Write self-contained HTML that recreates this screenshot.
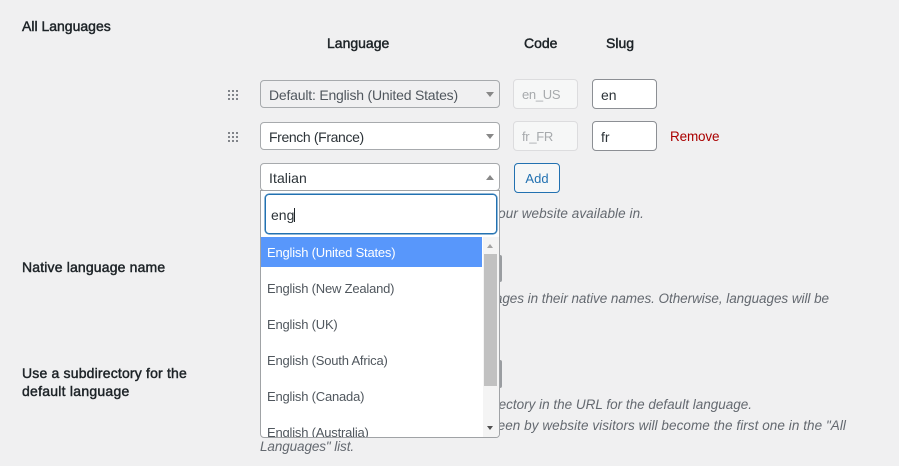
<!DOCTYPE html>
<html lang="en">
<head>
<meta charset="utf-8">
<title>All Languages</title>
<style>
html,body{margin:0;padding:0}
body{width:899px;height:466px;overflow:hidden;position:relative;background:#f0f0f1;color:#1d2327;font:14px/18px "Liberation Sans",sans-serif}
.t{position:absolute;white-space:nowrap;line-height:18px}
.b{color:#1d2327;-webkit-text-stroke:.45px #1d2327}
.i{font-style:italic;color:#646970;font-size:13.5px}
.box{position:absolute;box-sizing:border-box;border:1px solid #8c8f94;border-radius:4px;background:#fff;color:#2c3338;padding-left:8px}
.sel{left:260px;width:240px;height:28px;line-height:28px;border-color:#a7aaad}
.code{left:513px;width:65px;height:30px;line-height:30px;background:#f6f7f7;border-color:#dcdcde;color:#a7aaad;padding-left:8px;font-size:13px;letter-spacing:-.3px}
.slug{left:592px;width:65px;height:30px;line-height:30px;padding-left:8px}
.arr{position:absolute;width:0;height:0;border-left:4px solid transparent;border-right:4px solid transparent}
.dn{border-top:5px solid #888}
.up{border-bottom:5px solid #888}
.grip{position:absolute;left:228px;width:10px;height:10px;background-image:radial-gradient(circle at 1px 1px,#787c82 1px,transparent 1.2px);background-size:4px 4px}
.tog{position:absolute;left:500px;width:2px;background:#9a9da1;border-radius:0 2px 2px 0}
#dd{position:absolute;left:260px;top:190px;width:240px;height:248px;box-sizing:border-box;background:#fff;border:1px solid #a0a3a6;border-radius:0 0 4px 4px;overflow:hidden;z-index:2}
#search{position:absolute;left:4px;top:3px;width:232px;height:40px;box-sizing:border-box;border:1px solid #2271b1;border-radius:4px;box-shadow:0 0 0 .5px #2271b1;line-height:40px;padding-left:5px;color:#2c3338}
#caret{position:absolute;left:28px;top:13px;width:1px;height:14px;background:#1d2327}
.o{position:absolute;left:0;width:221px;height:30px;line-height:32px;padding-left:6px;box-sizing:border-box;color:#50575e;white-space:nowrap;font-size:13px;letter-spacing:-.2px}
.hl{background:#5897fb;color:#fff}
#track{position:absolute;left:222px;top:46px;width:16px;height:200px;background:#f4f4f4}
#thumb{position:absolute;left:1px;top:17px;width:13px;height:132px;background:#c1c1c1}
</style>
</head>
<body>

<div class="t b" style="left:22px;top:17px">All Languages</div>
<div class="t b" style="left:327px;top:34px">Language</div>
<div class="t b" style="left:524px;top:34px">Code</div>
<div class="t b" style="left:606px;top:34px">Slug</div>

<div class="grip" style="top:90px"></div>
<div class="box sel" style="top:80px;background:#f0f0f1;color:#50575e;letter-spacing:-.2px">Default: English (United States)</div>
<div class="arr dn" style="left:486px;top:92px"></div>
<div class="box code" style="top:79px">en_US</div>
<div class="box slug" style="top:79px">en</div>

<div class="grip" style="top:132px"></div>
<div class="box sel" style="top:122px;letter-spacing:-.37px">French (France)</div>
<div class="arr dn" style="left:486px;top:134px"></div>
<div class="box code" style="top:121px">fr_FR</div>
<div class="box slug" style="top:121px">fr</div>
<div class="t" style="left:670px;top:128px;color:#a00;font-size:13.5px;letter-spacing:-.15px">Remove</div>

<div class="box sel" style="top:163px;letter-spacing:.08px">Italian</div>
<div class="arr up" style="left:486px;top:175px"></div>
<div class="box" style="left:514px;top:163px;width:46px;height:30px;line-height:30px;padding:0;text-align:center;background:#f6f7f7;border-color:#2271b1;color:#2271b1;font-size:13px">Add</div>

<div class="t i" style="right:255px;top:205px;letter-spacing:.07px">Select the languages you want your website available in.</div>

<div class="t b" style="left:22px;top:258px;letter-spacing:.16px">Native language name</div>
<div class="tog" style="top:255px;height:27px"></div>
<div class="t i" style="right:70px;top:290px;letter-spacing:-.05px">Show languages in their native names. Otherwise, languages will be</div>

<div class="t b" style="left:22px;top:364px;letter-spacing:.18px">Use a subdirectory for the</div>
<div class="t b" style="left:22px;top:382px;letter-spacing:.25px">default language</div>
<div class="tog" style="top:360px;height:28px"></div>
<div class="t i" style="right:147px;top:396px">Use a subdirectory in the URL for the default language.</div>
<div class="t i" style="right:53px;top:417px;letter-spacing:.06px">The default language as seen by website visitors will become the first one in the "All</div>
<div class="t i" style="left:260px;top:438px;letter-spacing:-.1px">Languages" list.</div>

<div id="dd">
  <div id="search">eng<div id="caret"></div></div>
  <div class="o hl" style="top:46px">English (United States)</div>
  <div class="o" style="top:82px">English (New Zealand)</div>
  <div class="o" style="top:118px">English (UK)</div>
  <div class="o" style="top:154px">English (South Africa)</div>
  <div class="o" style="top:190px">English (Canada)</div>
  <div class="o" style="top:226px">English (Australia)</div>
  <div id="track">
    <div class="arr up" style="left:4px;top:7px;border-bottom-color:#a3a3a3;border-left-width:3.5px;border-right-width:3.5px;border-bottom-width:4px"></div>
    <div id="thumb"></div>
    <div class="arr dn" style="left:4px;top:189px;border-top-color:#505050;border-left-width:3.5px;border-right-width:3.5px;border-top-width:4px"></div>
  </div>
</div>

</body>
</html>
